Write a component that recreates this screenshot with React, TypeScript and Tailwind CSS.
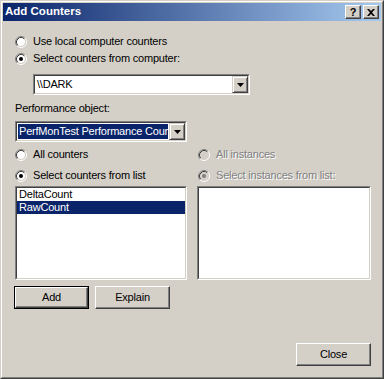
import React from "react";

const FONT = "[font-family:'Liberation_Sans',Arial,sans-serif]";

function Radio({ checked, disabled }: { checked?: boolean; disabled?: boolean }) {
  return (
    <svg width="12" height="12" viewBox="0 0 12 12" className="shrink-0">
      <circle cx="6" cy="6" r="4.2" fill={disabled ? "#d4d0c8" : "#ffffff"} />
      <path d="M2.11 9.89 A5.5 5.5 0 0 1 9.89 2.11" fill="none" stroke="#808080" strokeWidth="1" />
      <path d="M9.89 2.11 A5.5 5.5 0 0 1 2.11 9.89" fill="none" stroke="#ffffff" strokeWidth="1" />
      <path d="M2.82 9.18 A4.5 4.5 0 0 1 9.18 2.82" fill="none" stroke="#404040" strokeWidth="1" />
      <path d="M9.18 2.82 A4.5 4.5 0 0 1 2.82 9.18" fill="none" stroke="#d4d0c8" strokeWidth="1" />
      {checked && <circle cx="6" cy="6" r="2" fill={disabled ? "#808080" : "#000000"} />}
    </svg>
  );
}

function RadioRow({ label, checked, disabled }: { label: string; checked?: boolean; disabled?: boolean }) {
  return (
    <div className="flex h-[17px] items-center gap-[6px]">
      <Radio checked={checked} disabled={disabled} />
      <span
        className={
          disabled
            ? "text-[#808080] [text-shadow:1px_1px_0_#ffffff] leading-none"
            : "text-black leading-none"
        }
      >
        {label}
      </span>
    </div>
  );
}

function Sunken({ className, children }: { className?: string; children?: React.ReactNode }) {
  return (
    <div
      className={
        "border border-t-[#808080] border-l-[#808080] border-r-white border-b-white " + (className ?? "")
      }
    >
      <div className="h-full w-full border border-t-[#404040] border-l-[#404040] border-r-[#d4d0c8] border-b-[#d4d0c8] bg-white">
        {children}
      </div>
    </div>
  );
}

function DropButton() {
  return (
    <div className="flex h-[17px] w-[16px] shrink-0 items-center justify-center border border-t-[#d4d0c8] border-l-[#d4d0c8] border-r-[#404040] border-b-[#404040] bg-[#d4d0c8] shadow-[inset_1px_1px_0_#ffffff,inset_-1px_-1px_0_#808080]">
      <svg width="7" height="4" viewBox="0 0 7 4">
        <path d="M0 0 H7 L3.5 4 Z" fill="#000" />
      </svg>
    </div>
  );
}

function Combo({
  text,
  width,
  selected,
}: {
  text: string;
  width: string;
  selected?: boolean;
}) {
  return (
    <Sunken className={width + " h-[21px]"}>
      <div className="flex h-full items-center">
        <div className="flex h-full min-w-0 flex-1 items-center overflow-hidden pl-[1px] pr-[1px]">
          <div
            className={
              selected
                ? "flex h-[15px] w-full items-center overflow-hidden whitespace-nowrap bg-[#0a246a] pl-[1px] text-white"
                : "flex h-[15px] w-full items-center overflow-hidden whitespace-nowrap pl-[1px] text-black"
            }
          >
            {text}
          </div>
        </div>
        <DropButton />
      </div>
    </Sunken>
  );
}

function Button({ label, isDefault, width }: { label: string; isDefault?: boolean; width: string }) {
  const inner =
    "flex h-full w-full items-center justify-center border border-t-white border-l-white border-r-[#404040] border-b-[#404040] bg-[#d4d0c8] shadow-[inset_-1px_-1px_0_#808080] text-black";
  if (isDefault) {
    return (
      <div className={width + " h-[23px] border border-black"}>
        <div className={inner}>{label}</div>
      </div>
    );
  }
  return (
    <div className={width + " h-[23px]"}>
      <div className={inner}>{label}</div>
    </div>
  );
}

function CaptionButton({ children }: { children: React.ReactNode }) {
  return (
    <div className="flex h-[14px] w-[16px] items-center justify-center border border-t-white border-l-white border-r-[#404040] border-b-[#404040] bg-[#d4d0c8] shadow-[inset_-1px_-1px_0_#808080]">
      {children}
    </div>
  );
}

export default function App() {
  return (
    <div className={"h-[379px] w-[384px] bg-[#d4d0c8] text-[11px] tracking-[-0.2px] " + FONT}>
      <div className="h-full w-full border border-t-[#d4d0c8] border-l-[#d4d0c8] border-r-[#404040] border-b-[#404040]">
        <div className="flex h-full w-full flex-col border border-t-white border-l-white border-r-[#808080] border-b-[#808080] p-[1px]">
          {/* Title bar */}
          <div className="flex h-[18px] items-center justify-between bg-[linear-gradient(to_right,#0a246a,#a6caf0)] pl-[2px] pr-[2px]">
            <span className="text-[11.5px] font-bold leading-none tracking-[0px] text-white">Add Counters</span>
            <div className="flex items-center gap-[2px]">
              <CaptionButton>
                <span className="text-[11px] font-bold leading-none text-black">?</span>
              </CaptionButton>
              <CaptionButton>
                <svg width="8" height="7" viewBox="0 0 8 7">
                  <path d="M0 0 H2 L4 2 L6 0 H8 L5 3.5 L8 7 H6 L4 5 L2 7 H0 L3 3.5 Z" fill="#000" />
                </svg>
              </CaptionButton>
            </div>
          </div>

          {/* Body */}
          <div className="flex flex-1 flex-col pl-[12px] pr-[10px]">
            <div className="mt-[12px]">
              <RadioRow label="Use local computer counters" />
              <RadioRow label="Select counters from computer:" checked />
            </div>
            <div className="mt-[7px] pl-[18px]">
              <Combo text="\\DARK" width="w-[217px]" />
            </div>
            <div className="mt-[7px] flex h-[13px] items-center leading-none">Performance object:</div>
            <div className="mt-[6px]">
              <Combo text="PerfMonTest Performance Counters" width="w-[172px]" selected />
            </div>

            <div className="mt-[4px] flex gap-[10px]">
              <div className="flex w-[172px] flex-col">
                <RadioRow label="All counters" />
                <div className="mt-[4px]">
                  <RadioRow label="Select counters from list" checked />
                </div>
                <Sunken className="mt-[2px] h-[94px] w-[172px]">
                  <div className="flex flex-col">
                    <div className="flex h-[13px] items-center pl-[2px] leading-none text-black">DeltaCount</div>
                    <div className="flex h-[13px] items-center bg-[#0a246a] pl-[2px] leading-none text-white">
                      RawCount
                    </div>
                  </div>
                </Sunken>
              </div>
              <div className="flex w-[174px] flex-col">
                <div className="pl-[1px]">
                  <RadioRow label="All instances" disabled />
                </div>
                <div className="mt-[4px] pl-[1px]">
                  <RadioRow label="Select instances from list:" checked disabled />
                </div>
                <Sunken className="mt-[2px] h-[94px] w-[174px]" />
              </div>
            </div>

            <div className="mt-[6px] flex">
              <div className="-ml-[1px] flex gap-[6px]">
                <Button label="Add" isDefault width="w-[75px]" />
                <Button label="Explain" width="w-[75px]" />
              </div>
            </div>

            <div className="mt-[34px] flex justify-end">
              <Button label="Close" width="w-[75px]" />
            </div>
          </div>
        </div>
      </div>
    </div>
  );
}
